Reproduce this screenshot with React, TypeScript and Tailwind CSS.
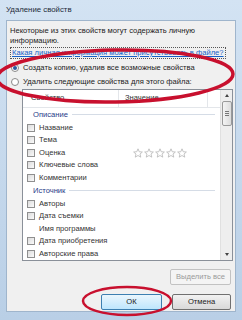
import React from 'react'

const font = { fontFamily: '"Liberation Sans", Arial, sans-serif' }

function Box() {
  return <span className="inline-block w-[8px] h-[8px] border border-[#8f8f8f] bg-gradient-to-br from-[#dcdcdc] to-[#fafafa] shrink-0" />
}

function Star() {
  return (
    <svg width="10" height="10" viewBox="0 0 24 24">
      <path d="M12 2l3 7 7.5.6-5.7 4.9 1.8 7.4L12 18l-6.6 3.9 1.8-7.4L1.5 9.6 9 9z" fill="#fff" stroke="#b8b8b8" strokeWidth="2" />
    </svg>
  )
}

function Row({ label, check = true, stars = false }: { label: string; check?: boolean; stars?: boolean }) {
  return (
    <div className="flex items-center h-[12.6px] gap-[4px] pl-[4px]">
      {check ? <Box /> : <span className="w-[8px]" />}
      <span className="w-[86px]">{label}</span>
      {stars && (
        <span className="flex gap-[1px] ml-[4px]">
          <Star /><Star /><Star /><Star /><Star />
        </span>
      )}
    </div>
  )
}

function Group({ label }: { label: string }) {
  return (
    <div className="flex items-center h-[14px] pl-[10px] gap-[4px] text-[#1f3c88]">
      <span>{label}</span>
      <span className="flex-1 h-px bg-[#d5dce6] mr-[5px]" />
    </div>
  )
}

export default function App() {
  return (
    <div className="relative w-[242px] h-[320px] bg-gradient-to-b from-[#d3e3f3] to-[#b9cfe6] overflow-hidden text-[7.6px] leading-[10px] text-[#222]" style={font}>
      <div className="h-[20px] pl-[6px] pt-[5px] text-[7.8px] text-[#1e2b3a]">Удаление свойств</div>
      <div className="mx-[6px] h-[292px] bg-[#f0f0f0] border border-[#9fb5cc] flex flex-col px-[3px] pt-[5px]">
        <p>Некоторые из этих свойств могут содержать личную<br />информацию.</p>
        <div className="mt-[1px] border border-dotted border-[#555] w-fit px-[1px]">
          <span className="text-[#1560c8] underline whitespace-nowrap">Какая личная информация может присутствовать в файле?</span>
        </div>
        <div className="flex flex-col gap-[4px] mt-[4px] pl-[1px]">
          <div className="flex items-center gap-[4px]">
            <span className="w-[8px] h-[8px] rounded-full border border-[#8a8a8a] bg-white flex items-center justify-center">
              <span className="w-[4px] h-[4px] rounded-full bg-[#2a5aa0]" />
            </span>
            <span>Создать копию, удалив все возможные свойства</span>
          </div>
          <div className="flex items-center gap-[4px]">
            <span className="w-[8px] h-[8px] rounded-full border border-[#8a8a8a] bg-white" />
            <span>Удалить следующие свойства для этого файла:</span>
          </div>
        </div>
        <div className="ml-[12px] mt-[2px] w-[211px] h-[172px] border border-[#8a9099] bg-white flex overflow-hidden">
          <div className="flex-1 flex flex-col text-[#333]">
            <div className="flex h-[18px] items-center border-b border-[#e3e6ea] pl-[8px]">
              <span className="w-[88px] border-r border-[#e3e6ea] h-full flex items-center">Свойство</span>
              <span className="pl-[6px] flex-1 border-r border-[#e3e6ea] h-full flex items-center">Значение</span>
              <span className="w-[12px]" />
            </div>
            <Group label="Описание" />
            <Row label="Название" />
            <Row label="Тема" />
            <Row label="Оценка" stars />
            <Row label="Ключевые слова" />
            <Row label="Комментарии" />
            <Group label="Источник" />
            <Row label="Авторы" />
            <Row label="Дата съемки" />
            <Row label="Имя программы" check={false} />
            <Row label="Дата приобретения" />
            <Row label="Авторские права" />
          </div>
          <div className="w-[12px] bg-[#eeeeee] border-l border-[#e0e0e0] flex flex-col items-center">
            <span className="mt-[4px] w-0 h-0 border-l-[2px] border-r-[2px] border-b-[3px] border-l-transparent border-r-transparent border-b-[#444]" />
            <div className="mt-[4px] w-[10px] h-[25px] rounded-[2px] border border-[#9a9a9a] bg-gradient-to-r from-[#f4f4f4] to-[#dcdcdc] flex flex-col items-center justify-center gap-[1px]">
              <span className="w-[4px] h-px bg-[#777]" />
              <span className="w-[4px] h-px bg-[#777]" />
              <span className="w-[4px] h-px bg-[#777]" />
            </div>
            <span className="mt-auto mb-[4px] w-0 h-0 border-l-[2px] border-r-[2px] border-t-[3px] border-l-transparent border-r-transparent border-t-[#444]" />
          </div>
        </div>
        <div className="flex justify-end mt-[8px] pr-[1px]">
          <div className="w-[61px] h-[16px] border border-[#c2c2c2] rounded-[2px] bg-[#f4f4f4] text-[#9a9a9a] flex items-center justify-center">Выделить все</div>
        </div>
        <div className="flex justify-end gap-[10px] mt-[9px] pr-[1px]">
          <div className="w-[61px] h-[16px] border border-[#3c7fb1] rounded-[2px] bg-gradient-to-b from-[#eaf6fd] to-[#bee6fd] flex items-center justify-center">ОК</div>
          <div className="w-[59px] h-[16px] border border-[#707070] rounded-[2px] bg-gradient-to-b from-[#f2f2f2] to-[#d9d9d9] flex items-center justify-center">Отмена</div>
        </div>
      </div>
      <svg className="absolute left-0 top-0 pointer-events-none" width="242" height="320" viewBox="0 0 242 320">
        <ellipse cx="115" cy="76" rx="118" ry="26" transform="rotate(-1 115 76)" fill="none" stroke="#c8102e" strokeWidth="3.5" />
        <ellipse cx="127" cy="301" rx="44" ry="14" fill="none" stroke="#c8102e" strokeWidth="2.5" />
      </svg>
    </div>
  )
}
